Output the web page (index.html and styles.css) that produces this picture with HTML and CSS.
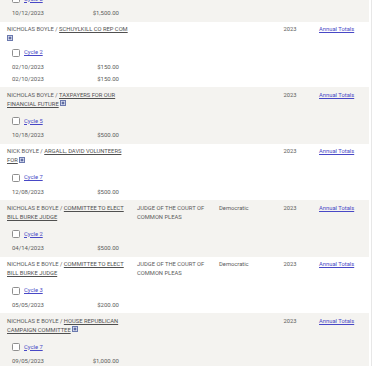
FILE: index.html
```html
<!DOCTYPE html>
<html lang="en">
<head>
<meta charset="utf-8">
<title>Contributions</title>
<link rel="stylesheet" href="styles.css">
</head>
<body>
<div class="page">
  <table class="results">
    <colgroup>
      <col class="c-name"><col class="c-office"><col class="c-party"><col class="c-year"><col class="c-link">
    </colgroup>
    <tbody>
      <tr class="alt">
        <td class="cell-name">
          <div class="cycle cycle--flush"><span class="box"></span><a href="#" class="link">Cycle 2</a></div>
          <div class="txn"><span>10/12/2023</span><span>$1,500.00</span></div>
        </td>
        <td></td><td></td><td></td><td></td>
      </tr>
      <tr>
        <td class="cell-name">
          <div class="name">NICHOLAS BOYLE / <a href="#" class="filer">SCHUYLKILL CO REP COM</a> <svg class="expand" viewBox="0 0 6 6"><rect x=".5" y=".5" width="5" height="5" fill="#d3d8ec" stroke="#6b79ae"/><path d="M3 1.6v2.8M1.6 3h2.8" stroke="#2f3f82" stroke-width=".9"/></svg></div>
          <div class="cycle cycle--tight"><span class="box"></span><a href="#" class="link">Cycle 2</a></div>
          <div class="txn"><span>02/10/2023</span><span>$150.00</span></div>
          <div class="txn txn--next"><span>02/10/2023</span><span>$150.00</span></div>
        </td>
        <td></td><td></td>
        <td>2023</td>
        <td><a href="#" class="link">Annual Totals</a></td>
      </tr>
      <tr class="alt">
        <td class="cell-name">
          <div class="name">NICHOLAS BOYLE / <a href="#" class="filer">TAXPAYERS FOR OUR FINANCIAL FUTURE</a> <svg class="expand" viewBox="0 0 6 6"><rect x=".5" y=".5" width="5" height="5" fill="#d3d8ec" stroke="#6b79ae"/><path d="M3 1.6v2.8M1.6 3h2.8" stroke="#2f3f82" stroke-width=".9"/></svg></div>
          <div class="cycle"><span class="box"></span><a href="#" class="link">Cycle 5</a></div>
          <div class="txn"><span>10/18/2023</span><span>$500.00</span></div>
        </td>
        <td></td><td></td>
        <td>2023</td>
        <td><a href="#" class="link">Annual Totals</a></td>
      </tr>
      <tr>
        <td class="cell-name">
          <div class="name">NICK BOYLE / <a href="#" class="filer">ARGALL, DAVID VOLUNTEERS FOR</a> <svg class="expand" viewBox="0 0 6 6"><rect x=".5" y=".5" width="5" height="5" fill="#d3d8ec" stroke="#6b79ae"/><path d="M3 1.6v2.8M1.6 3h2.8" stroke="#2f3f82" stroke-width=".9"/></svg></div>
          <div class="cycle"><span class="box"></span><a href="#" class="link">Cycle 7</a></div>
          <div class="txn"><span>12/08/2023</span><span>$500.00</span></div>
        </td>
        <td></td><td></td>
        <td>2023</td>
        <td><a href="#" class="link">Annual Totals</a></td>
      </tr>
      <tr class="alt">
        <td class="cell-name">
          <div class="name">NICHOLAS E BOYLE / <a href="#" class="filer">COMMITTEE TO ELECT BILL BURKE JUDGE</a></div>
          <div class="cycle"><span class="box"></span><a href="#" class="link">Cycle 2</a></div>
          <div class="txn"><span>04/14/2023</span><span>$500.00</span></div>
        </td>
        <td>JUDGE OF THE COURT OF COMMON PLEAS</td>
        <td>Democratic</td>
        <td>2023</td>
        <td><a href="#" class="link">Annual Totals</a></td>
      </tr>
      <tr>
        <td class="cell-name">
          <div class="name">NICHOLAS E BOYLE / <a href="#" class="filer">COMMITTEE TO ELECT BILL BURKE JUDGE</a></div>
          <div class="cycle"><span class="box"></span><a href="#" class="link">Cycle 3</a></div>
          <div class="txn"><span>05/05/2023</span><span>$200.00</span></div>
        </td>
        <td>JUDGE OF THE COURT OF COMMON PLEAS</td>
        <td>Democratic</td>
        <td>2023</td>
        <td><a href="#" class="link">Annual Totals</a></td>
      </tr>
      <tr class="alt">
        <td class="cell-name">
          <div class="name">NICHOLAS E BOYLE / <a href="#" class="filer">HOUSE REPUBLICAN CAMPAIGN COMMITTEE</a> <svg class="expand" viewBox="0 0 6 6"><rect x=".5" y=".5" width="5" height="5" fill="#d3d8ec" stroke="#6b79ae"/><path d="M3 1.6v2.8M1.6 3h2.8" stroke="#2f3f82" stroke-width=".9"/></svg></div>
          <div class="cycle"><span class="box"></span><a href="#" class="link">Cycle 7</a></div>
          <div class="txn"><span>09/05/2023</span><span>$1,000.00</span></div>
        </td>
        <td></td><td></td>
        <td>2023</td>
        <td><a href="#" class="link">Annual Totals</a></td>
      </tr>
    </tbody>
  </table>
</div>
</body>
</html>
```
FILE: styles.css
```css
html, body {
  margin: 0;
  padding: 0;
  background: #ffffff;
}
body {
  font-family: Roboto, "Liberation Sans", Arial, sans-serif;
  font-size: 5.8px;
  line-height: 9px;
  color: #5b5b5b;
}
.page {
  width: 371px;
  border-right: 1px solid #e7e7e7;
  margin-top: -10px;
  min-height: 400px;
}
.results {
  width: 369px;
  table-layout: fixed;
  border-collapse: collapse;
}
.c-name { width: 137px; }
.c-office { width: 82px; }
.c-party { width: 64.5px; }
.c-year { width: 35.5px; }
.c-link { width: 50px; }
.results td {
  vertical-align: top;
  padding: 3.5px 4px 2.5px 0;
}
.results td.cell-name {
  padding-left: 7px;
}
.alt {
  background: #f4f3f0;
}
.filer {
  color: #505050;
  text-decoration: underline;
}
.link {
  color: #4848c6;
  text-decoration: underline;
}
.expand {
  width: 6px;
  height: 6px;
  vertical-align: -0.5px;
}
.cycle {
  display: flex;
  align-items: center;
  gap: 4px;
  height: 11px;
  margin-top: 7px;
  padding-left: 5px;
}
.cycle--tight { margin-top: 4px; }
.cycle--flush { margin-top: 0; }
.box {
  width: 6px;
  height: 6px;
  border: 0.7px solid #8f8f8f;
  border-radius: 1.5px;
  background: #fff;
}
.txn {
  display: flex;
  justify-content: space-between;
  width: 107px;
  padding-left: 5px;
  margin-top: 2.5px;
  line-height: 12px;
  font-size: 6px;
}
.txn--next { margin-top: 0; }
```
